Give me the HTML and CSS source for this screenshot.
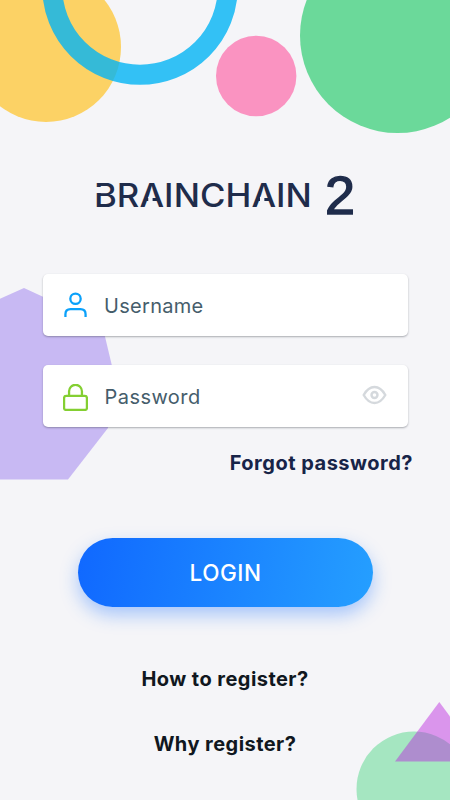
FILE: index.html
```html
<!DOCTYPE html>
<html lang="en">
<head>
<meta charset="utf-8">
<title>Brainchain 2</title>
<link rel="stylesheet" href="styles.css">
</head>
<body>
<main class="screen">
  <svg class="backdrop" viewBox="0 0 450 800" aria-hidden="true">
    <circle cx="46" cy="47" r="75" fill="#fcd265"/>
    <circle cx="140" cy="-13" r="87.8" fill="none" stroke="#02b4f4" stroke-opacity=".8" stroke-width="20"/>
    <circle cx="256.2" cy="76" r="40.2" fill="#fa93c1"/>
    <circle cx="397.5" cy="35.5" r="97.5" fill="#6bd99a"/>
    <path d="M-36 315 24 288l78 36 10 42-4 62-40 51.500H-36z" fill="#c8b9f3"/>
    <circle cx="414" cy="789" r="57.500" fill="#a5e6c1"/>
    <path d="M439.300 702 483 761.500H395z" fill="#ba21dd" fill-opacity=".45"/>
  </svg>
  <h1 class="logo"><span class="wordmark"><span class="cut-b">B</span>R<span class="cut-a">A</span>INCH<span class="cut-a">A</span>IN</span><span class="version">2</span></h1>
  <form class="form">
    <label class="field">
      <svg class="icon user" viewBox="0 0 24 26"><circle cx="12" cy="6.500" r="5"/><path d="M2.300 24v-2.500c0-3.200 2-5 5-5h9.400c3 0 5 1.800 5 5V24"/></svg>
      <span class="label">Username</span>
    </label>
    <label class="field">
      <svg class="icon lock" viewBox="0 0 24 26"><rect x="1" y="11.500" width="22" height="13.500" rx="2"/><path d="M5.800 11.500V7a6.200 6.200 0 0 1 12.400 0v4.500"/></svg>
      <span class="label pass">Password</span>
      <svg class="eye" viewBox="0 0 24 20"><path d="M1.200 10C4 5 7.500 2 12 2s8 3 10.800 8c-2.800 5-6.300 8-10.800 8S4 15 1.200 10z"/><circle cx="12" cy="10" r="3"/></svg>
    </label>
    <a class="forgot">Forgot password?</a>
    <button class="login" type="button">LOGIN</button>
  </form>
  <nav class="links">
    <a class="how">How to register?</a>
    <a class="why">Why register?</a>
  </nav>
</main>
</body>
</html>
```
FILE: styles.css
```css
* { box-sizing: border-box; }
body { margin: 0; font-family: Inter, "Liberation Sans", sans-serif; }
.screen {
  position: relative;
  width: 450px;
  height: 800px;
  overflow: hidden;
  display: flex;
  flex-direction: column;
  background: #f5f5f8;
  isolation: isolate;
}
.backdrop { position: absolute; inset: 0; width: 450px; height: 800px; z-index: -1; }
.logo {
  display: flex;
  align-items: flex-start;
  height: 60px;
  margin: 165px 0 0 94px;
  color: #1f2c4b;
  font-weight: 400;
  white-space: nowrap;
}
.wordmark {
  width: 231px;
  font-size: 32px;
  font-weight: 500;
  line-height: 62px;
  letter-spacing: .05px;
  transform: scaleX(1.085);
  transform-origin: left;
}
.cut-a, .cut-b { position: relative; }
.cut-a::after {
  content: "";
  position: absolute;
  left: 8px;
  top: 21px;
  width: 4px;
  height: 5px;
  background: #f5f5f8;
}
.cut-b::after {
  content: "";
  position: absolute;
  left: 0;
  top: 11px;
  width: 8px;
  height: 6px;
  background: #f5f5f8;
}
.version {
  font-family: "Liberation Sans", sans-serif;
  font-size: 54px;
  line-height: 60px;
  -webkit-text-stroke: 1.4px #1f2c4b;
}
.form { display: flex; flex-direction: column; margin: 49px 42px 0 43px; }
.field {
  display: flex;
  align-items: center;
  height: 62px;
  padding: 0 21px 0 20px;
  margin-bottom: 29px;
  border-radius: 5px;
  background: #fff;
  box-shadow: 0 1px 2px rgba(45, 50, 60, .38);
}
.icon { width: 25px; height: 27px; fill: none; stroke-width: 2.2; }
.user { stroke: #0ba1fa; }
.lock { margin-top: 2px; stroke: #84cf32; }
.label { margin: 2px 0 0 16px; color: #455d6b; font-size: 20px; letter-spacing: .3px; line-height: 28px; }
.pass { margin-left: 16.5px; letter-spacing: .45px; }
.eye { width: 25px; height: 20px; margin: -2px 0 0 auto; fill: none; stroke: #d5d9dd; stroke-width: 2.4; }
.forgot { align-self: flex-end; margin: -5px -5px 0 0; color: #172448; font-size: 20px; font-weight: 700; letter-spacing: .5px; line-height: 24px; }
.login {
  width: 295px;
  height: 69px;
  margin: 63px 0 0 35px;
  padding: 0 0 1px;
  border: 0;
  border-radius: 35px;
  background: linear-gradient(100deg, #1068ff, #259fff);
  box-shadow: 0 8px 18px rgba(40, 120, 255, .38);
  color: #fff;
  font: 500 22.5px Inter, sans-serif;
  letter-spacing: .5px;
}
.links { display: flex; flex-direction: column; align-items: center; gap: 41px; margin-top: 60px; color: #101720; font-size: 20px; font-weight: 700; letter-spacing: .45px; line-height: 24px; }
```
